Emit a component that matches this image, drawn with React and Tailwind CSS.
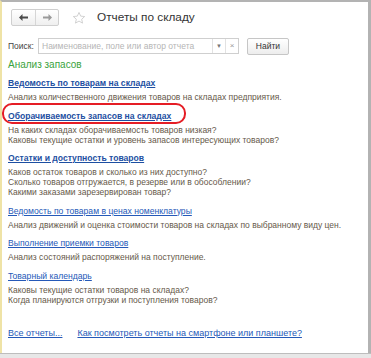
import React from "react";

const sections = [
  {
    title: "Ведомость по товарам на складах",
    bold: true,
    lines: ["Анализ количественного движения товаров на складах предприятия."],
  },
  {
    title: "Оборачиваемость запасов на складах",
    bold: true,
    marked: true,
    lines: [
      "На каких складах оборачиваемость товаров низкая?",
      "Каковы текущие остатки и уровень запасов интересующих товаров?",
    ],
  },
  {
    title: "Остатки и доступность товаров",
    bold: true,
    lines: [
      "Каков остаток товаров и сколько из них доступно?",
      "Сколько товаров отгружается, в резерве или в обособлении?",
      "Какими заказами зарезервирован товар?",
    ],
  },
  {
    title: "Ведомость по товарам в ценах номенклатуры",
    lines: ["Анализ движений и оценка стоимости товаров на складах по выбранному виду цен."],
  },
  {
    title: "Выполнение приемки товаров",
    lines: ["Анализ состояний распоряжений на поступление."],
  },
  {
    title: "Товарный календарь",
    lines: [
      "Каковы текущие остатки товаров на складах?",
      "Когда планируются отгрузки и поступления товаров?",
    ],
  },
];

function Star() {
  return (
    <svg width="14" height="14" viewBox="0 0 24 24" fill="none" stroke="#c8c8c8" strokeWidth="1.4">
      <path d="M12 2.5l2.9 6.3 6.8.7-5.1 4.6 1.5 6.7L12 17.3l-6.1 3.5 1.5-6.7-5.1-4.6 6.8-.7z" />
    </svg>
  );
}

export default function App() {
  return (
    <div
      className="w-[371px] h-[358px] flex flex-col bg-white overflow-hidden"
      style={{ fontFamily: '"Liberation Sans", Arial, sans-serif' }}
    >
      <div className="flex-1 flex flex-col border-t-2 border-t-[#b3b3b3] border-r-[3px] border-r-[#b3b3b3] border-l-2 border-l-[#efe3a6] min-h-0">
        {/* header */}
        <div className="flex items-center h-[17px] mt-[7px] ml-[9px]">
          <div className="flex h-[17px] w-[48px] border border-[#cfcfcf] rounded-[2px] bg-gradient-to-b from-white to-[#efefef]">
            <div className="w-[24px] flex items-center justify-center border-r border-[#d6d6d6]">
              <svg width="9" height="7" viewBox="0 0 9 7">
                <path d="M0 3.5L3.5 0v2.5H9v2H3.5V7z" fill="#4a4a4a" />
              </svg>
            </div>
            <div className="flex-1 flex items-center justify-center">
              <svg width="9" height="7" viewBox="0 0 9 7">
                <path d="M9 3.5L5.5 0v2.5H0v2h5.5V7z" fill="#9a9a9a" />
              </svg>
            </div>
          </div>
          <div className="ml-[13px] flex items-center">
            <Star />
          </div>
          <div className="ml-[11px] text-[11.8px] text-[#333]">Отчеты по складу</div>
        </div>

        {/* search */}
        <div className="flex items-center mt-[12px] ml-[6px] h-[16px]">
          <span className="text-[8.5px] text-[#444] w-[30px]">Поиск:</span>
          <div className="flex h-[16px] w-[201px] border border-[#cfcfcf] bg-white">
            <div className="flex-1 flex items-center pl-[3px] text-[8.5px] text-[#b5b5b5] whitespace-nowrap overflow-hidden border-r border-[#e2e2e2]">
              Наименование, поле или автор отчета
            </div>
            <div className="w-[13px] flex items-center justify-center text-[6px] text-[#777] border-r border-[#e2e2e2]">▼</div>
            <div className="w-[12px] flex items-center justify-center text-[8px] text-[#999]">×</div>
          </div>
          <div className="ml-[8px] h-[17px] w-[42px] flex items-center justify-center border border-[#c6c6c6] rounded-[2px] bg-gradient-to-b from-white to-[#ededed] text-[8.5px] text-[#333]">
            Найти
          </div>
        </div>

        {/* content */}
        <div className="ml-[6px] mt-[5px] flex flex-col">
          <div className="text-[10px] text-[#3aa33e] leading-[12px]">Анализ запасов</div>
          {sections.map((s, i) => (
            <div key={i} className={i === 0 ? "mt-[4px]" : "mt-[5.5px]"}>
              <div className="relative h-[12px] leading-[12px]">
                <span
                  className={
                    "underline text-[8.6px] " +
                    (s.bold ? "font-bold text-[#1d4fa2]" : "text-[#2559b8]")
                  }
                >
                  {s.title}
                </span>
                {s.marked && (
                  <div className="absolute left-[-6px] top-[-5px] w-[184px] h-[21px] border-[2.5px] border-[#e51d25] rounded-[10px]" />
                )}
              </div>
              <div className="mt-[5px] text-[8.5px] leading-[10px] text-[#66594a]">
                {s.lines.map((l, j) => (
                  <div key={j}>{l}</div>
                ))}
              </div>
            </div>
          ))}
          <div className="mt-[22px] flex text-[9px] text-[#2559b8] leading-[12px]">
            <span className="underline">Все отчеты...</span>
            <span className="underline ml-[15px]">Как посмотреть отчеты на смартфоне или планшете?</span>
          </div>
        </div>
      </div>
      <div className="h-[5px] bg-[#e7e7e7] border-t border-[#bdbdbd]" />
    </div>
  );
}
